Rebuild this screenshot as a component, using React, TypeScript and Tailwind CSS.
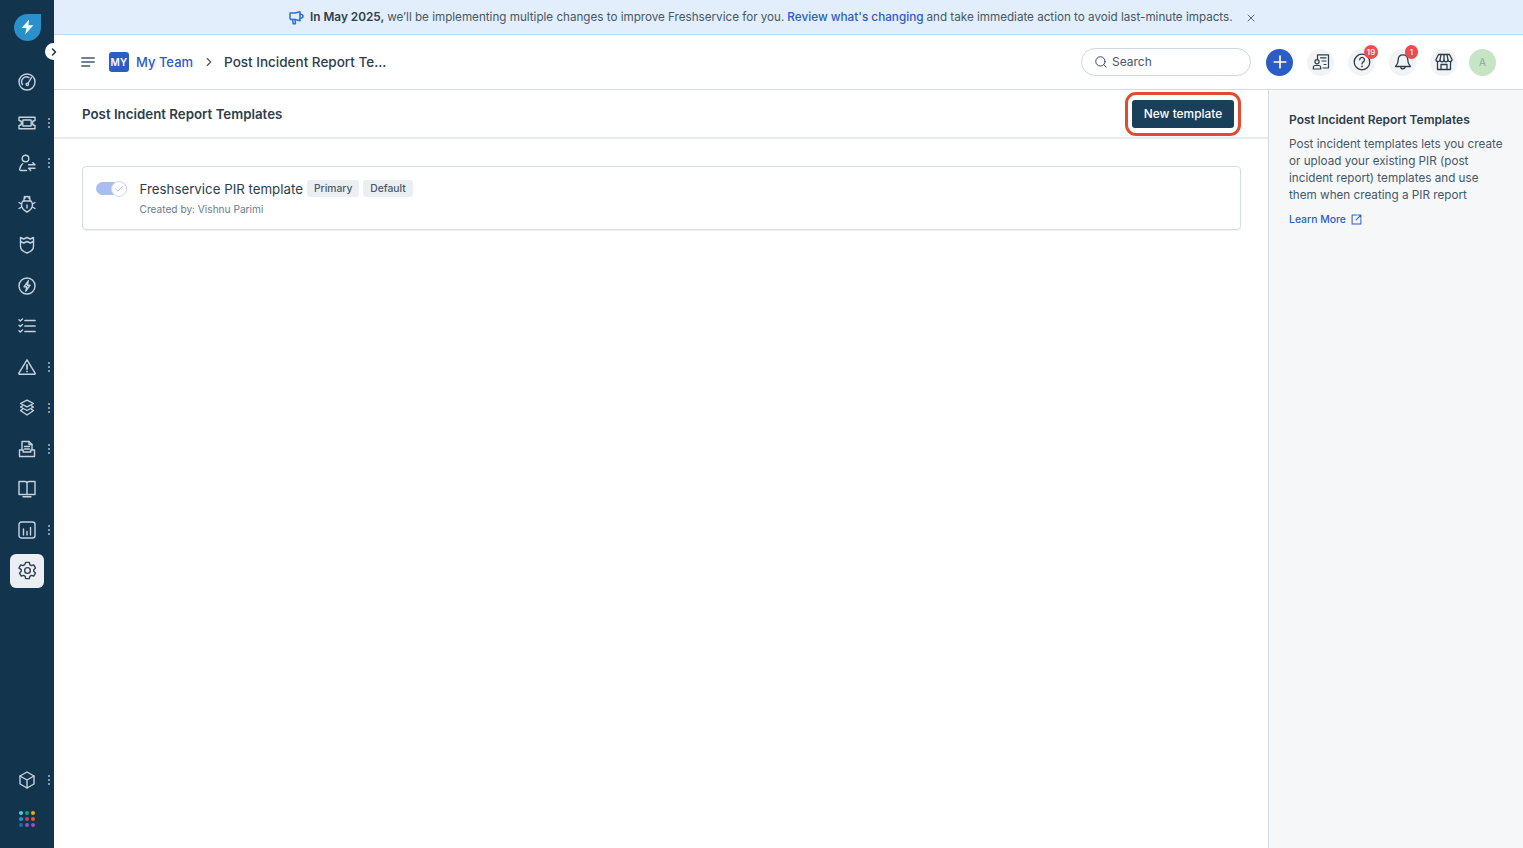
import React from "react";
import { Search, X, Plus, Check, ChevronRight } from "lucide-react";

const S = "#c4d3df";
const Svg = ({ children, c = S, w = 1.4, size = 18 }: { children: React.ReactNode; c?: string; w?: number; size?: number }) => (
  <svg width={size} height={size} viewBox="0 0 18 18" fill="none" stroke={c} strokeWidth={w} strokeLinecap="round" strokeLinejoin="round">{children}</svg>
);

const Gauge = () => <Svg><circle cx="9" cy="9" r="8" /><path d="M4.500 11.500a4.800 4.800 0 0 1 6.500-6.800" /><path d="M13.500 4.500L10 10.500" /><circle cx="9.300" cy="11.300" r="1.200" /></Svg>;
const Ticket = () => <Svg><path d="M1 3.200h16v3.300a2.500 2.500 0 0 0 0 5v3.300H1v-3.300a2.500 2.500 0 0 0 0-5z" /><rect x="4.800" y="6" width="8.400" height="6" rx=".6" /></Svg>;
const UserSwap = () => <Svg><circle cx="7.500" cy="4.500" r="3.300" /><path d="M8.500 16.500H2.800c-.8 0-1.300-.6-1.100-1.400.4-2 1.400-4 2.900-5.300" /><path d="M10.500 10.800h6.500M14.800 8.800l2.200 2M17 14.300h-6.500M12.700 16.500l-2.200-2.200" /></Svg>;
const Bug = () => <Svg><path d="M5 6h8c1 1 1.500 2.500 1.500 4 0 3-2.500 5.500-5.500 7-3-1.500-5.500-4-5.500-7 0-1.500.5-3 1.500-4z" /><path d="M6 6V4.500a3 3 0 0 1 6 0V6M6.300 1.500l1 1.500M11.700 1.500l-1 1.500M3.500 9L1 7.500M14.500 9L17 7.500M3.500 12L1 13.500M14.500 12l2.500 1.500M9 10v3" /></Svg>;
const Shield = () => <Svg><path d="M2.500 1.500l3.200 1.500L9 1.500l3.300 1.500 3.200-1.500v9c0 3.200-3.500 5.500-6.500 6.500-3-1-6.500-3.300-6.500-6.500z" /><path d="M2.500 5.500l3.200 1.500L9 5.500 12.300 7l3.200-1.500" /></Svg>;
const ZapCircle = () => <Svg><circle cx="9" cy="9" r="8" /><path d="M10.300 3.800L6 9.800h2.800l-1 4.400 4.300-6H9.300z" /></Svg>;
const Checks = () => <Svg><path d="M1 2.800l1.300 1.300L4.500 2M1 8.300l1.300 1.300 2.200-2.100M1 13.800l1.300 1.300 2.200-2.100" /><path d="M7 3.500h10M7 9h10M7 14.500h10" strokeWidth="1.700" /></Svg>;
const Alert = () => <Svg><path d="M9 1.800L.9 15.200c-.3.500 0 1 .6 1h15c.6 0 .9-.5.600-1z" /><path d="M9 6.800v4.200M9 13.400v.1" strokeWidth="1.700" /></Svg>;
const Layers = () => <Svg><path d="M9 1.200l6.500 3.300L9 7.800 2.500 4.500z" /><path d="M4.500 6.800L2.500 8 9 11.500 15.500 8l-2-1.200" /><path d="M4.500 10.300l-2 1.200L9 16l6.500-4.500-2-1.200" /></Svg>;
const Tray = () => <Svg><path d="M4 9.500V1.500h7l3 3v5" /><path d="M11 1.500v3h3M6.500 6.500h5M6.500 9h5" /><path d="M1.500 10h3.700v2h7.600v-2h3.700v6.500h-15z" /></Svg>;
const Book = () => <Svg><path d="M1 1.500h6c1.200 0 2 .8 2 2v11H1zM17 1.500h-6c-1.200 0-2 .8-2 2v11h8z" /><path d="M5 16.700h8" /></Svg>;
const Chart = () => <Svg><rect x="1" y="1" width="16" height="16" rx="2.500" /><path d="M5.500 8v6M9 10.500V14M12.500 6.500V14" /></Svg>;
const Gear = ({ c = S }: { c?: string }) => (
  <Svg c={c} w={1.3} size={19}>
    <circle cx="9" cy="9" r="2.700" />
    <path d="M7.300 1.300h3.400l.5 2.200 1.500.9 2.200-.7 1.700 3-1.700 1.500v1.600l1.700 1.500-1.700 3-2.200-.7-1.500.9-.5 2.200H7.300l-.5-2.200-1.500-.9-2.200.7-1.700-3 1.700-1.500V8.200L.9 6.700l1.700-3 2.200.7 1.500-.9z" />
  </Svg>
);
const Cube = () => <Svg><path d="M9 1l7 4v8l-7 4-7-4V5z" /><path d="M2 5l7 4 7-4M9 9v8" /></Svg>;

const D = "#2d3e4c";
const Contacts = () => <Svg c={D} w={1.200}><path d="M5.500 6V1.800h11V15H11" /><path d="M8.500 4.800h5.500M10 8h4M12 11.500h2" /><circle cx="5" cy="8.800" r="2.100" /><path d="M1.300 16v-1.500c0-1.100.9-2 2-2h3.400c1.100 0 2 .9 2 2V16z" /></Svg>;
const Help = () => <Svg c={D} w={1.300}><circle cx="9" cy="9" r="7.800" /><path d="M6.700 6.800a2.400 2.400 0 1 1 3.600 2.100c-.8.500-1.300 1-1.300 2" /><path d="M9 13.300v.1" strokeWidth="1.700" /></Svg>;
const BellI = () => <Svg c={D} w={1.300}><path d="M9 1.800c-3 0-4.800 2.300-4.800 5.200 0 4-1.900 5-2.700 6.500h15c-.8-1.500-2.700-2.500-2.700-6.500 0-2.900-1.800-5.200-4.800-5.200z" /><path d="M6.800 13.700a2.200 2.200 0 0 0 4.400 0" /></Svg>;
const StoreI = () => <Svg c={D} w={1.300}><path d="M3.500 1.500h11L17 6.500a2 2 0 0 1-4 .3 2 2 0 0 1-4 0 2 2 0 0 1-4 0 2 2 0 0 1-4-.3z" /><path d="M6 1.500L5 6.800M12 1.500l1 5.300M9 1.500v5.300M2.500 8.500v8h13v-8" /><path d="M6 16.500v-5h6v5" /></Svg>;
const Horn = () => (
  <svg width="15" height="14" viewBox="0 0 15 14" fill="none" stroke="#2c6fd6" strokeWidth="1.500" strokeLinejoin="round" strokeLinecap="round">
    <path d="M1 2h5l5-1.200v9L6 8.500H2.500C1.600 8.500 1 8 1 7z" />
    <path d="M11 3.200c2 0 3 .8 3 2s-1 2-3 2" />
    <path d="M3.500 8.500l.7 4.300h2.300L6 8.500" />
  </svg>
);
const External = () => (
  <svg width="11" height="11" viewBox="0 0 12 12" fill="none" stroke="#2c5cc5" strokeWidth="1.100" strokeLinecap="round" strokeLinejoin="round">
    <path d="M6 1.200H1.200v9.600h9.600V6" /><path d="M5.500 6.500l5.300-5.300M7.500 1.200h3.300v3.300" />
  </svg>
);

const Dots = () => (
  <span className="absolute left-[48px] top-1/2 flex -translate-y-1/2 flex-col gap-[2px]">
    <i className="h-[2px] w-[2px] rounded-full bg-[#a9bccb]" />
    <i className="h-[2px] w-[2px] rounded-full bg-[#a9bccb]" />
    <i className="h-[2px] w-[2px] rounded-full bg-[#a9bccb]" />
  </span>
);

const Item = ({ children, dots, active }: { children: React.ReactNode; dots?: boolean; active?: boolean }) => (
  <div className="relative flex h-[40.75px] w-full items-center justify-center">
    {active ? <div className="flex h-[34px] w-[34px] items-center justify-center rounded-md bg-[#ebeff3]">{children}</div> : children}
    {dots && <Dots />}
  </div>
);

const Round = ({ children, badge }: { children: React.ReactNode; badge?: string }) => (
  <div className="relative flex h-[27px] w-[27px] items-center justify-center rounded-full bg-[#f1f3f5]">
    {children}
    {badge && (
      <span className={`absolute -top-[4px] flex h-[14px] items-center justify-center rounded-full bg-[#f04a50] text-[8px] font-medium text-white ${badge.length > 1 ? "right-[-3px] w-[14px]" : "right-[-2px] w-[13px]"}`}>{badge}</span>
    )}
  </div>
);

const Tag = ({ children }: { children: React.ReactNode }) => (
  <span className="flex h-[17px] items-center rounded-[3px] bg-[#ebeff3] px-[7px] text-[10.3px] font-medium text-[#475867]">{children}</span>
);

export default function App() {
  return (
    <div className="relative flex h-[848px] w-[1523px] overflow-hidden bg-white text-[#12344d]" style={{ fontFamily: "Inter, 'Liberation Sans', sans-serif" }}>
      <aside className="flex h-full w-[54px] shrink-0 flex-col items-center bg-[#12344d]">
        <div className="flex h-[61.5px] w-full items-start justify-center pt-[13.5px]">
          <div className="flex h-[27px] w-[27px] items-center justify-center rounded-full rounded-tr-[4px] bg-[#2a90c9]">
            <svg width="15" height="16" viewBox="0 0 14 15" fill="white"><path d="M8.500 0.500L1.500 8.500H6L4.800 14.500L12.500 5.800H7.800z" /></svg>
          </div>
        </div>
        <Item><Gauge /></Item>
        <Item dots><Ticket /></Item>
        <Item dots><UserSwap /></Item>
        <Item><Bug /></Item>
        <Item><Shield /></Item>
        <Item><ZapCircle /></Item>
        <Item><Checks /></Item>
        <Item dots><Alert /></Item>
        <Item dots><Layers /></Item>
        <Item dots><Tray /></Item>
        <Item><Book /></Item>
        <Item dots><Chart /></Item>
        <Item active><Gear c="#2d3e4c" /></Item>
        <div className="mt-auto w-full pb-[10px]">
          <Item dots><Cube /></Item>
          <div className="flex h-[38px] items-center justify-center">
            <div className="grid grid-cols-3 gap-[1.5px]">
              {["bg-[#45d4e8]", "bg-[#1aa35f]", "bg-[#f2a80f]", "bg-[#2c8fd0]", "bg-[#dd3a47]", "bg-[#e4572e]", "bg-[#2268ac]", "bg-[#8a55c4]", "bg-[#a04fb5]"].map((c, i) => (
                <i key={i} className={`h-[4.5px] w-[4.5px] rounded-full ${c}`} />
              ))}
            </div>
          </div>
        </div>
      </aside>

      <div className="absolute left-[45px] top-[43px] flex h-[17px] w-[17px] items-center justify-center rounded-full bg-white">
        <ChevronRight size={12} color="#12344d" strokeWidth={3} className="ml-[1px]" />
      </div>

      <div className="flex min-w-0 flex-1 flex-col">
        <div className="flex h-[35px] shrink-0 items-center border-b border-[#bfdcf7] bg-[#e2eefb] pl-[235px] pt-[1px] text-[#475867]">
          <Horn />
          <span className="ml-[6px] text-[11.8px] font-semibold text-[#2d3e4c]">In May 2025,</span>
          <span className="ml-[3px] text-[11.65px]">we’ll be implementing multiple changes to improve Freshservice for you.</span>
          <span className="ml-[3px] text-[11.75px] font-medium text-[#2c5cc5]">Review what's changing</span>
          <span className="ml-[3px] text-[11.65px]">and take immediate action to avoid last-minute impacts.</span>
          <X size={12} color="#475867" strokeWidth={1.8} className="ml-[12px]" />
        </div>

        <header className="flex h-[55px] shrink-0 items-center border-b border-[#d5dbe2] pl-[27px] pr-[27px]">
          <svg width="14" height="10" viewBox="0 0 14 10" stroke="#475867" strokeWidth="1.300" strokeLinecap="round"><path d="M.7 1h12.600M.7 5h12.600M.7 9h8" /></svg>
          <div className="ml-[14px] flex h-[20px] w-[20px] items-center justify-center rounded-[3px] bg-[#2c5cc5] text-[10px] font-semibold tracking-[0.3px] text-white">MY</div>
          <span className="ml-[7px] mt-[1px] text-[13px] font-medium text-[#2c5cc5]">My Team</span>
          <ChevronRight size={14} color="#475867" strokeWidth={2} className="ml-[9px]" />
          <span className="ml-[8px] text-[13.5px] font-medium leading-[20px] text-[#2d3e4c]">Post Incident Report Te...</span>
          <div className="ml-auto flex h-[28px] w-[170px] items-center rounded-full border border-[#cfd7df] pl-[12px] text-[12px] text-[#475867]">
            <Search size={14} color="#2d3e4c" strokeWidth={1.6} />
            <span className="ml-[4px]">Search</span>
          </div>
          <div className="ml-[15px] flex h-[27px] w-[27px] items-center justify-center rounded-full bg-[#2c5cc5]">
            <Plus size={20} color="white" strokeWidth={2} />
          </div>
          <div className="ml-[14px]"><Round><Contacts /></Round></div>
          <div className="ml-[14px]"><Round badge="19"><Help /></Round></div>
          <div className="ml-[14px]"><Round badge="1"><BellI /></Round></div>
          <div className="ml-[14px]"><Round><StoreI /></Round></div>
          <div className="ml-[12px] flex h-[27px] w-[27px] items-center justify-center rounded-full bg-[#c5e5c5] text-[10px] text-[#8fa69a]">A</div>
        </header>

        <div className="flex min-h-0 flex-1">
          <main className="min-w-0 flex-1">
            <div className="flex h-[49px] items-center justify-between border-b-2 border-[#e9ecef] pl-[28px] pr-[34px]">
              <h1 className="mt-[2px] text-[13.3px] font-semibold text-[#2d3e4c]">Post Incident Report Templates</h1>
              <div className="relative flex h-[28px] w-[102px] items-center justify-center rounded-[3px] bg-[#1a3f5a] text-[11.9px] font-medium text-white">
                New template
                <div className="absolute -inset-x-[7px] -inset-y-[8px] rounded-[11px] border-[3px] border-[#e04b32]" />
              </div>
            </div>
            <div className="pl-[28px] pr-[27px] pt-[27px]">
              <div className="flex h-[64px] items-center rounded-[4px] border border-[#d5dbe2] pl-[13px] shadow-[0_1px_1px_rgba(18,52,77,0.06)]">
                <div className="relative mb-[19px] h-[13px] w-[31px] rounded-full bg-[#a9bdee]">
                  <div className="absolute right-0 top-[-1.5px] flex h-[16px] w-[16px] items-center justify-center rounded-full border border-[#d5dbe2] bg-white">
                    <Check size={10} color="#8fa8e0" strokeWidth={1.8} />
                  </div>
                </div>
                <div className="ml-[12.5px]">
                  <div className="flex h-[20px] items-center gap-[4px]">
                    <span className="mt-[2px] text-[13.3px] text-[#2d3e4c]">Freshservice PIR template</span>
                    <Tag>Primary</Tag>
                    <Tag>Default</Tag>
                  </div>
                  <div className="mt-[3px] text-[10.15px] text-[#6b7c8c]">Created by: Vishnu Parimi</div>
                </div>
              </div>
            </div>
          </main>
          <aside className="w-[255px] shrink-0 border-l border-[#d5dbe2] bg-[#f5f7f9] pl-[20px] pr-[14px] pt-[22px]">
            <h2 className="text-[12px] font-semibold leading-[16px] text-[#2d3e4c]">Post Incident Report Templates</h2>
            <p className="mt-[8px] text-[11.7px] leading-[17px] text-[#475867]">Post incident templates lets you create or upload your existing PIR (post incident report) templates and use them when creating a PIR report</p>
            <div className="mt-[8px] flex items-center text-[10.4px] font-medium text-[#2c5cc5]">
              Learn More
              <span className="ml-[5px]"><External /></span>
            </div>
          </aside>
        </div>
      </div>
    </div>
  );
}
